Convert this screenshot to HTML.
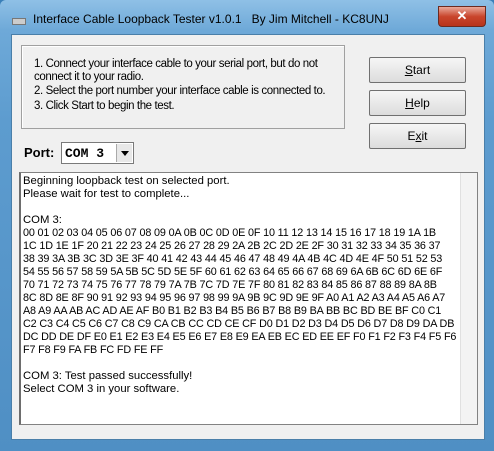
<!DOCTYPE html>
<html><head><style>
body{margin:0;width:494px;height:451px;overflow:hidden;background:#3a7fb8;font-family:"Liberation Sans",sans-serif;}
.win{position:absolute;left:0;top:0;width:494px;height:451px;background:linear-gradient(180deg,#8fc0e6 0,#6ea9d8 30px,#5d9ccf 120px,#4f8fc4 451px);border-radius:6px 6px 0 0;}
.title{position:absolute;left:33px;top:12px;font-size:12px;color:#000;white-space:nowrap;}
.close{position:absolute;left:438px;top:6px;width:46px;height:19px;border-radius:0 0 4px 4px;background:linear-gradient(#e9a99a,#c9452c 50%,#b8341c);border:1px solid #6b2a20;color:#fff;font-weight:bold;font-size:13px;text-align:center;line-height:18px;}
.ico{position:absolute;left:12px;top:18px;width:12px;height:5px;background:#ccc;border:1px solid #777;}
.client{position:absolute;left:11px;top:34px;width:472px;height:404px;background:#f0f0f0;border:1px solid #4a7fa9;}
.grp{position:absolute;left:21px;top:45px;width:322px;height:82px;border:1px solid #a0a0a0;box-shadow:inset 1px 1px 0 #fff;font-size:11.5px;letter-spacing:-0.4px;line-height:13.5px;}
.grp div{position:absolute;left:12px;white-space:nowrap;}
.btn{position:absolute;left:369px;width:95px;height:24px;border:1px solid #707070;background:linear-gradient(#f6f6f6,#dcdcdc);font-size:12px;text-align:center;line-height:24px;border-radius:2px;}
.port{position:absolute;left:24px;top:145px;font-size:13px;font-weight:bold;}
.combo{position:absolute;left:61px;top:142px;width:71px;height:20px;background:#fff;border:1px solid #7a7a7a;}
.combo span{position:absolute;left:3px;top:3px;font-family:"Liberation Mono",monospace;font-weight:bold;font-size:13px;}
.combo i{position:absolute;right:1px;top:1px;width:15px;height:18px;background:#e8e8e8;border-left:1px solid #aaa;}
.combo i:after{content:"";position:absolute;left:4px;top:7px;border:4px solid transparent;border-top:5px solid #000;border-bottom:0;}
.txt{position:absolute;left:19px;top:172px;width:456px;height:251px;background:#fff;border:1px solid #828282;border-left:2px solid #6d6d6d;overflow:hidden;}
.txt pre{margin:0;position:absolute;left:2px;top:2px;font-family:"Liberation Sans",sans-serif;font-size:11.3px;line-height:13px;}
.hx{font-size:10.8px;letter-spacing:-0.15px;}
.sb{position:absolute;right:0;top:0;width:16px;height:251px;background:#f3f3f3;border-left:1px solid #e0e0e0;}
</style></head><body>
<div class="win">
<div class="ico"></div>
<div class="title">Interface Cable Loopback Tester v1.0.1 &nbsp;&nbsp;By Jim Mitchell - KC8UNJ</div>
<div class="close">✕</div>
<div class="client"></div>
<div class="grp">
<div style="top:12px">1. Connect your interface cable to your serial port, but do not</div>
<div style="top:25px">connect it to your radio.</div>
<div style="top:39px">2. Select the port number your interface cable is connected to.</div>
<div style="top:54px">3. Click Start to begin the test.</div>
</div>
<div class="btn" style="top:57px"><u>S</u>tart</div>
<div class="btn" style="top:90px"><u>H</u>elp</div>
<div class="btn" style="top:123px">E<u>x</u>it</div>
<div class="port">Port:</div>
<div class="combo"><span>COM 3</span><i></i></div>
<div class="txt"><pre>Beginning loopback test on selected port.
Please wait for test to complete...

COM 3:
<span class="hx">00 01 02 03 04 05 06 07 08 09 0A 0B 0C 0D 0E 0F 10 11 12 13 14 15 16 17 18 19 1A 1B
1C 1D 1E 1F 20 21 22 23 24 25 26 27 28 29 2A 2B 2C 2D 2E 2F 30 31 32 33 34 35 36 37
38 39 3A 3B 3C 3D 3E 3F 40 41 42 43 44 45 46 47 48 49 4A 4B 4C 4D 4E 4F 50 51 52 53
54 55 56 57 58 59 5A 5B 5C 5D 5E 5F 60 61 62 63 64 65 66 67 68 69 6A 6B 6C 6D 6E 6F
70 71 72 73 74 75 76 77 78 79 7A 7B 7C 7D 7E 7F 80 81 82 83 84 85 86 87 88 89 8A 8B
8C 8D 8E 8F 90 91 92 93 94 95 96 97 98 99 9A 9B 9C 9D 9E 9F A0 A1 A2 A3 A4 A5 A6 A7
A8 A9 AA AB AC AD AE AF B0 B1 B2 B3 B4 B5 B6 B7 B8 B9 BA BB BC BD BE BF C0 C1
C2 C3 C4 C5 C6 C7 C8 C9 CA CB CC CD CE CF D0 D1 D2 D3 D4 D5 D6 D7 D8 D9 DA DB
DC DD DE DF E0 E1 E2 E3 E4 E5 E6 E7 E8 E9 EA EB EC ED EE EF F0 F1 F2 F3 F4 F5 F6
F7 F8 F9 FA FB FC FD FE FF</span>

COM 3: Test passed successfully!
Select COM 3 in your software.</pre><div class="sb"></div></div>
</div>
</body></html>
